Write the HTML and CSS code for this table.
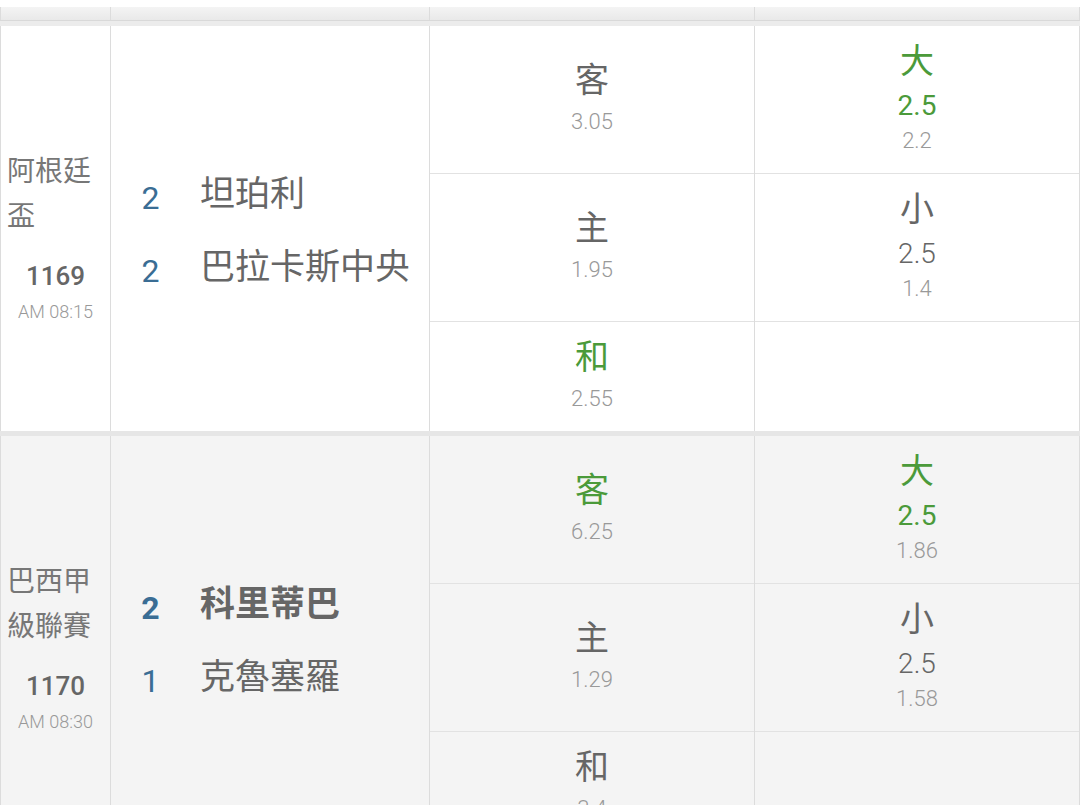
FILE: index.html
```html
<!DOCTYPE html>
<html lang="zh-Hant">
<head>
<meta charset="utf-8">
<title>賽事賠率</title>
<link rel="stylesheet" href="styles.css">
</head>
<body>
<div class="board">
  <div class="prev">
    <div class="pc c1"></div><div class="pc c2"></div><div class="pc c3"></div><div class="pc c4"></div>
  </div>
  <div class="sep"></div>

  <div class="match">
    <div class="col c1">
      <div class="league">阿根廷盃</div>
      <div class="num">1169</div>
      <div class="time">AM 08:15</div>
    </div>
    <div class="col c2">
      <div class="team"><span class="score">2</span><span class="name">坦珀利</span></div>
      <div class="team"><span class="score">2</span><span class="name">巴拉卡斯中央</span></div>
    </div>
    <div class="col c3 odds">
      <div class="cell"><div class="lbl">客</div><div class="val">3.05</div></div>
      <div class="cell"><div class="lbl">主</div><div class="val">1.95</div></div>
      <div class="cell last"><div class="lbl green">和</div><div class="val">2.55</div></div>
    </div>
    <div class="col c4 odds">
      <div class="cell"><div class="lbl green">大</div><div class="line green">2.5</div><div class="val small">2.2</div></div>
      <div class="cell"><div class="lbl">小</div><div class="line">2.5</div><div class="val small">1.4</div></div>
      <div class="cell last"></div>
    </div>
  </div>
  <div class="sep mid"></div>

  <div class="match alt">
    <div class="col c1">
      <div class="league">巴西甲級聯賽</div>
      <div class="num">1170</div>
      <div class="time">AM 08:30</div>
    </div>
    <div class="col c2">
      <div class="team win"><span class="score">2</span><span class="name">科里蒂巴</span></div>
      <div class="team"><span class="score">1</span><span class="name">克魯塞羅</span></div>
    </div>
    <div class="col c3 odds">
      <div class="cell"><div class="lbl green">客</div><div class="val">6.25</div></div>
      <div class="cell"><div class="lbl">主</div><div class="val">1.29</div></div>
      <div class="cell last"><div class="lbl">和</div><div class="val">3.4</div></div>
    </div>
    <div class="col c4 odds">
      <div class="cell"><div class="lbl green">大</div><div class="line green">2.5</div><div class="val small">1.86</div></div>
      <div class="cell"><div class="lbl">小</div><div class="line">2.5</div><div class="val small">1.58</div></div>
      <div class="cell last"></div>
    </div>
  </div>
</div>
</body>
</html>
```

FILE: styles.css
```css
* { box-sizing: border-box; }
html, body {
  margin: 0;
  padding: 0;
  background: #ffffff;
  overflow: hidden;
  height: 805px;
}
body {
  font-family: "Roboto", "Noto Sans CJK TC", "Noto Sans", sans-serif;
  color: #666;
}
.board {
  width: 1080px;
  padding-top: 7px;
}
.prev {
  display: flex;
  height: 14px;
  background: linear-gradient(#f4f4f4, #e9e9e9);
  border-bottom: 1px solid #d9d9d9;
}
.pc { height: 100%; }
.sep {
  height: 5px;
  background: #ececec;
}
.sep.mid {
  background: #e6e6e6;
}
.match {
  display: flex;
  height: 405px;
  background: #ffffff;
}
.match.alt {
  background: #f4f4f4;
}
.c1 { width: 110px; border-left: 1px solid #dcdcdc; }
.c2 { width: 319px; border-left: 1px solid #dcdcdc; }
.c3 { width: 325px; border-left: 1px solid #dcdcdc; }
.c4 { width: 326px; border-left: 1px solid #dcdcdc; border-right: 1px solid #dcdcdc; }

.col.c1 {
  display: flex;
  flex-direction: column;
  justify-content: center;
  padding-top: 14px;
}
.league {
  font-size: 28px;
  line-height: 45px;
  color: #777;
  padding-left: 6px;
  padding-right: 4px;
}
.num {
  margin-top: 22px;
  font-size: 26px;
  line-height: 30px;
  font-weight: 500;
  color: #666;
  text-align: center;
}
.time {
  margin-top: 10px;
  font-size: 18px;
  line-height: 22px;
  font-weight: 300;
  color: #999;
  text-align: center;
}

.col.c2 {
  display: flex;
  flex-direction: column;
  justify-content: center;
  padding-top: 4px;
}
.team {
  display: flex;
  align-items: baseline;
  height: 73px;
  line-height: 73px;
}
.score {
  width: 79px;
  text-align: center;
  font-size: 32px;
  color: #3a6d94;
  position: relative;
  top: 3px;
}
.name {
  margin-left: 10px;
  font-size: 35px;
  color: #666;
}
.team.win .score,
.team.win .name {
  font-weight: 700;
}

.odds {
  display: flex;
  flex-direction: column;
}
.cell {
  height: 148px;
  border-bottom: 1px solid #e2e2e2;
  display: flex;
  flex-direction: column;
  align-items: center;
  justify-content: center;
  padding-bottom: 6px;
}
.cell.last {
  flex: 1;
  border-bottom: none;
}
.lbl {
  font-size: 34px;
  line-height: 42px;
  color: #666;
}
.line {
  margin-top: 8px;
  font-size: 28px;
  line-height: 32px;
  font-weight: 300;
  color: #666;
}
.val {
  margin-top: 8px;
  font-size: 22px;
  line-height: 26px;
  font-weight: 300;
  color: #999;
}
.val.small {
  margin-top: 6px;
}
.green {
  color: #4b9a3a;
}
.line.green {
  font-weight: 400;
}
```
